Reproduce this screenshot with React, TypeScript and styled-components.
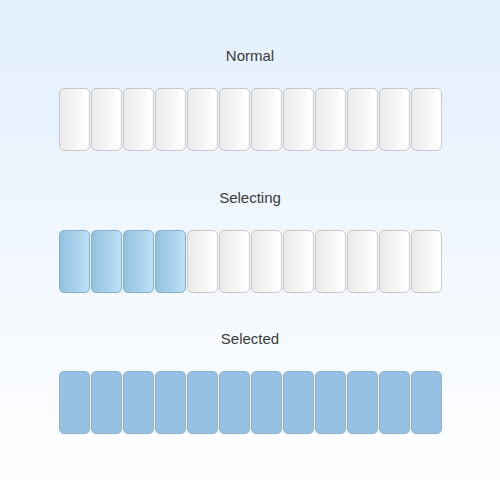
import React from "react";
import styled, { createGlobalStyle, css } from "styled-components";

const Global = createGlobalStyle`
  html, body { margin: 0; padding: 0; }
  body {
    width: 500px;
    height: 500px;
    background: linear-gradient(to bottom, #e2effd 0%, #f3f8fe 55%, #ffffff 100%);
    font-family: "Liberation Sans", Arial, sans-serif;
  }
`;

const Page = styled.div`
  width: 500px;
  height: 500px;
  display: flex;
  flex-direction: column;
  align-items: center;
  padding-top: 47px;
  box-sizing: border-box;
  gap: 37.6px;
`;

const Section = styled.div`
  display: flex;
  flex-direction: column;
  align-items: center;
  gap: 23px;
`;

const Label = styled.div`
  font-size: 15px;
  line-height: 18px;
  color: #3a3a3a;
`;

const Row = styled.div`
  display: flex;
  gap: 1px;
`;

type State = "normal" | "selecting" | "selected";

const Cell = styled.div<{ $state: State }>`
  width: 31px;
  height: 63px;
  box-sizing: border-box;
  border-radius: 5px;
  ${({ $state }) =>
    $state === "normal"
      ? css`
          border: 1px solid #c9c9c9;
          background: linear-gradient(to right, #ebebeb, #ffffff);
        `
      : $state === "selecting"
      ? css`
          border: 1px solid #86aecb;
          background: linear-gradient(to right, #93c0e1, #bde1f7);
        `
      : css`
          border: 1px solid #8db3d1;
          background: #97c1e2;
        `}
`;

const rows: { label: string; selected: number; state: State }[] = [
  { label: "Normal", selected: 0, state: "normal" },
  { label: "Selecting", selected: 4, state: "selecting" },
  { label: "Selected", selected: 12, state: "selected" },
];

export default function App() {
  return (
    <>
      <Global />
      <Page>
        {rows.map((r) => (
          <Section key={r.label}>
            <Label>{r.label}</Label>
            <Row>
              {Array.from({ length: 12 }).map((_, i) => (
                <Cell key={i} $state={i < r.selected ? r.state : "normal"} />
              ))}
            </Row>
          </Section>
        ))}
      </Page>
    </>
  );
}
